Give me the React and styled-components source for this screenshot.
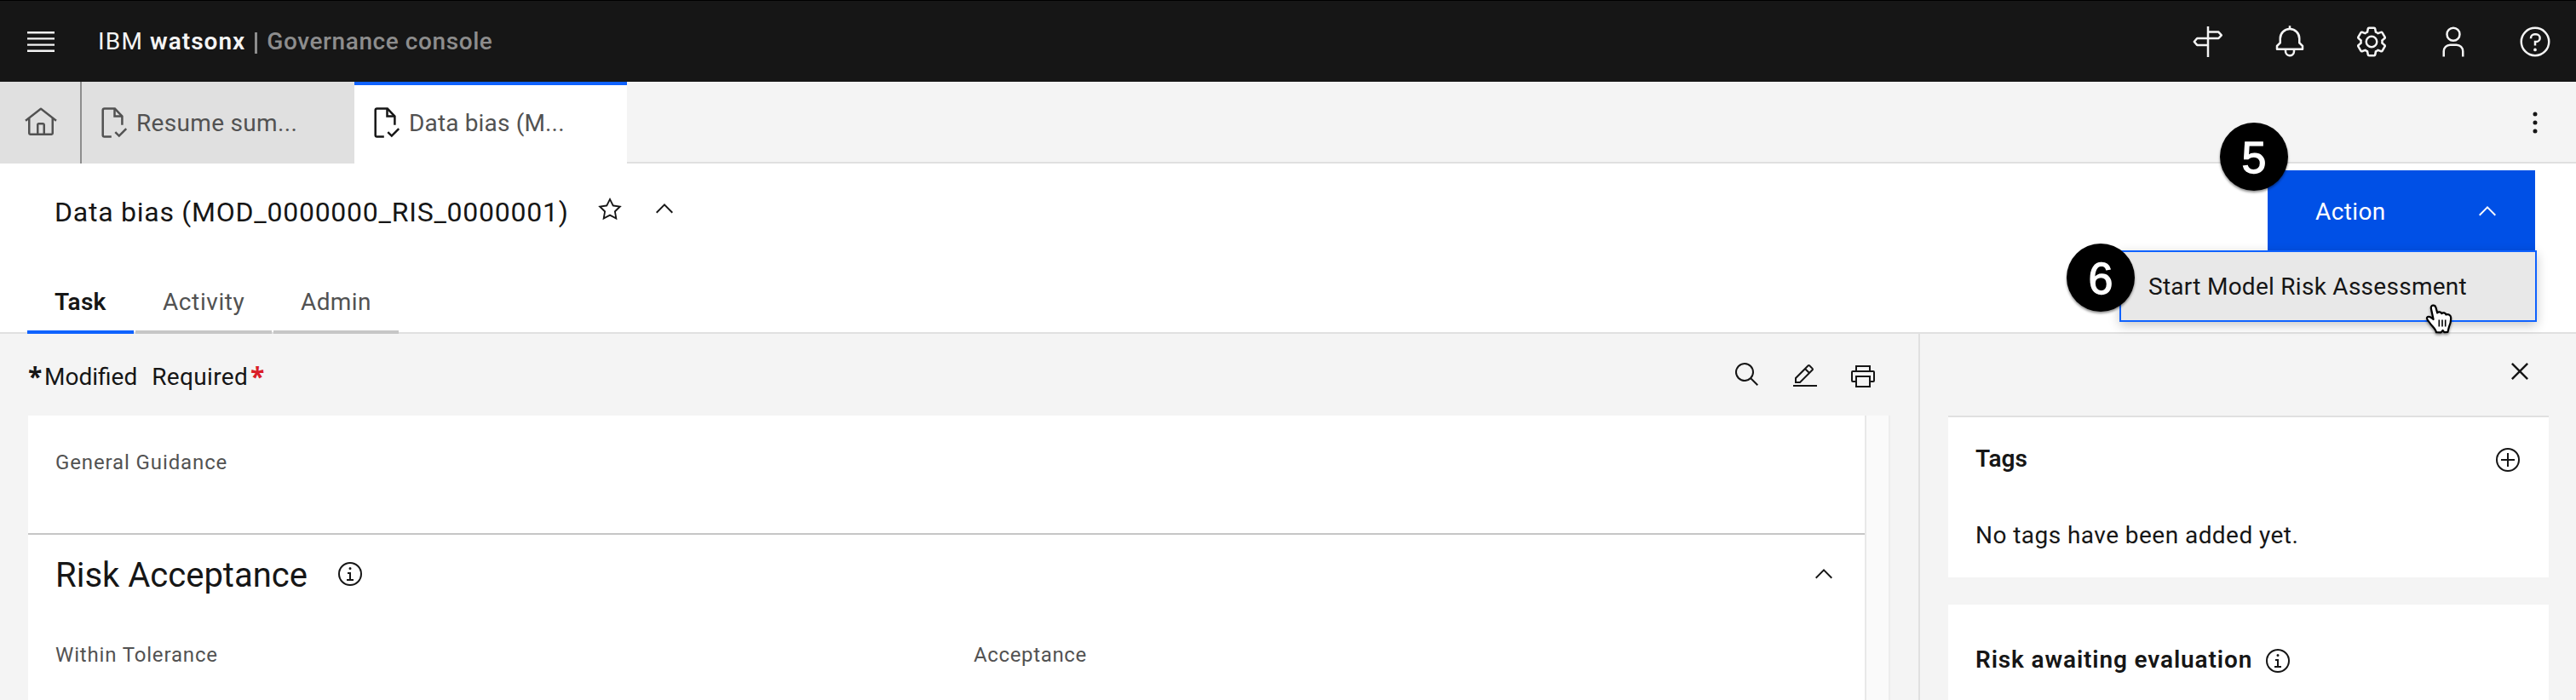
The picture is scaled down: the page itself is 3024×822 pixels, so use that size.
import React from "react";
import styled, { createGlobalStyle } from "styled-components";

const GlobalStyle = createGlobalStyle`
  * { box-sizing: border-box; }
  body {
    margin: 0;
    background: #f4f4f4;
    color: #161616;
    font-family: Roboto, "Liberation Sans", sans-serif;
    font-size: 28px;
    line-height: 36px;
  }
  button { font: inherit; color: inherit; background: none; border: 0; padding: 0; }
`;

/* ---------- icons ---------- */

const Svg = styled.svg`
  display: block;
  flex: none;
  width: ${(p) => p.$size}px;
  height: ${(p) => p.$size}px;
  fill: currentColor;
`;

const paths = {
  home: "M16.6123,2.2138a1.01,1.01,0,0,0-1.2427,0L1,13.4194l1.2427,1.5717L4,13.6208V26a2.0041,2.0041,0,0,0,2,2H26a2.0037,2.0037,0,0,0,2-2V13.63L29.7573,15,31,13.4282ZM18,26H14V18h4Zm2,0V18a2.0023,2.0023,0,0,0-2-2H14a2.002,2.002,0,0,0-2,2v8H6V12.0615l10-7.79,10,7.8005V26Z",
  bell: "M28.7071,19.293L26,16.5859V13a10.0136,10.0136,0,0,0-9-9.9492V1H15V3.0508A10.0136,10.0136,0,0,0,6,13v3.5859L3.2929,19.293A1,1,0,0,0,3,20v3a1,1,0,0,0,1,1h7v.7768a5.152,5.152,0,0,0,4.5,5.1987A5.0057,5.0057,0,0,0,21,25V24h7a1,1,0,0,0,1-1V20A1,1,0,0,0,28.7071,19.293ZM19,25a3,3,0,0,1-6,0V24h6Zm8-3H5V20.4141L7.707,17.707A1,1,0,0,0,8,17V13a8,8,0,0,1,16,0v4a1,1,0,0,0,.293.707L27,20.4141Z",
  settings:
    "M27,16.76c0-.25,0-.5,0-.76s0-.51,0-.77l1.92-1.68A2,2,0,0,0,29.3,11L26.94,7a2,2,0,0,0-1.73-1,2,2,0,0,0-.64.1l-2.43.82a11.35,11.35,0,0,0-1.31-.75l-.51-2.52a2,2,0,0,0-2-1.61H13.64a2,2,0,0,0-2,1.61l-.51,2.52a11.48,11.48,0,0,0-1.32.75L7.43,6.06A2,2,0,0,0,6.79,6,2,2,0,0,0,5.06,7L2.7,11a2,2,0,0,0,.41,2.51L5,15.24c0,.25,0,.5,0,.76s0,.51,0,.77L3.11,18.45A2,2,0,0,0,2.7,21L5.06,25a2,2,0,0,0,1.73,1,2,2,0,0,0,.64-.1l2.43-.82a11.35,11.35,0,0,0,1.31.75l.51,2.52a2,2,0,0,0,2,1.61h4.72a2,2,0,0,0,2-1.61l.51-2.52a11.48,11.48,0,0,0,1.32-.75l2.42.82a2,2,0,0,0,.64.1,2,2,0,0,0,1.73-1L29.3,21a2,2,0,0,0-.41-2.51ZM25.21,24l-3.43-1.16a8.86,8.86,0,0,1-2.71,1.57L18.36,28H13.64l-.71-3.55a9.36,9.36,0,0,1-2.7-1.57L6.79,24,4.43,20l2.72-2.4a8.9,8.9,0,0,1,0-3.13L4.43,12,6.79,8l3.43,1.16a8.86,8.86,0,0,1,2.71-1.57L13.64,4h4.72l.71,3.55a9.36,9.36,0,0,1,2.7,1.57L25.21,8,27.57,12l-2.72,2.4a8.9,8.9,0,0,1,0,3.13L27.57,20ZM16,22a6,6,0,1,1,6-6A5.94,5.94,0,0,1,16,22Zm0-10a3.91,3.91,0,0,0-4,4,3.91,3.91,0,0,0,4,4,3.91,3.91,0,0,0,4-4A3.91,3.91,0,0,0,16,12Z",
  user: "M16 4a5 5 0 1 1-5 5 5 5 0 0 1 5-5m0-2a7 7 0 1 0 7 7A7 7 0 0 0 16 2zM26 30H24V25a5 5 0 0 0-5-5H13a5 5 0 0 0-5 5v5H6V25a7 7 0 0 1 7-7h6a7 7 0 0 1 7 7z",
  help: "M16,2A14,14,0,1,0,30,16,14,14,0,0,0,16,2Zm0,26A12,12,0,1,1,28,16,12,12,0,0,1,16,28ZM16 22a1.5 1.5 0 1 0 1.5 1.5A1.5 1.5 0 0 0 16 22zM17,8H15.5A4.49,4.49,0,0,0,11,12.5V13h2v-.5A2.5,2.5,0,0,1,15.5,10H17a2.5,2.5,0,0,1,0,5H15v4.5h2V17a4.5,4.5,0,0,0,0-9Z",
  overflow:
    "M16 6a2 2 0 1 0 2 2 2 2 0 0 0-2-2zM16 14a2 2 0 1 0 2 2 2 2 0 0 0-2-2zM16 22a2 2 0 1 0 2 2 2 2 0 0 0-2-2z",
  star: "M16,6.52l2.76,5.58.46,1,1,.15,6.16.89L22,18.44l-.75.73.18,1,1.05,6.13-5.51-2.89L16,23l-.93.49L9.56,26.34l1-6.13.18-1L10,18.44,5.58,14.09l6.16-.89,1-.15.46-1L16,6.52M16,2l-4.55,9.22L1.28,12.69l7.36,7.18L6.9,30,16,25.22,25.1,30,23.36,19.87l7.36-7.17L20.55,11.22Z",
  chevronUp: "M16 10L26 20 24.6 21.4 16 12.8 7.4 21.4 6 20z",
  search:
    "M29,27.5859l-7.5521-7.5521a11.0177,11.0177,0,1,0-1.4141,1.4141L27.5859,29ZM4,13a9,9,0,1,1,9,9A9.01,9.01,0,0,1,4,13Z",
  edit: "M2 26H30V28H2zM25.4 9c.8-.8.8-2 0-2.8l-3.6-3.6c-.8-.8-2-.8-2.8 0l-15 15V24h6.4L25.4 9zM20.4 4L24 7.6l-3 3L17.4 7 20.4 4zM6 22v-3.6l10-10 3.6 3.6-10 10H6z",
  printer:
    "M28,9H25V3H7V9H4a2,2,0,0,0-2,2V21a2,2,0,0,0,2,2H7v6H25V23h3a2,2,0,0,0,2-2V11A2,2,0,0,0,28,9ZM9,5H23V9H9ZM23,27H9V17H23Zm5-6H25V15H7v6H4V11H28Z",
  info: "M17 22L17 14 13 14 13 16 15 16 15 22 12 22 12 24 20 24 20 22 17 22zM16 8a1.5 1.5 0 1 0 1.5 1.5A1.5 1.5 0 0 0 16 8zM16 30A14 14 0 1 1 30 16 14 14 0 0 1 16 30zm0-26A12 12 0 1 0 28 16 12 12 0 0 0 16 4z",
  add: "M16,4A12,12,0,1,1,4,16,12,12,0,0,1,16,4m0-2A14,14,0,1,0,30,16,14,14,0,0,0,16,2ZM24 15 17 15 17 8 15 8 15 15 8 15 8 17 15 17 15 24 17 24 17 17 24 17z",
  close:
    "M24 9.4 22.6 8 16 14.6 9.4 8 8 9.4 14.6 16 8 22.6 9.4 24 16 17.4 22.6 24 24 22.6 17.4 16 24 9.4z",
};

const Icon = ({ name, size = 32 }) => (
  <Svg $size={size} viewBox="0 0 32 32" aria-hidden="true">
    <path d={paths[name]} />
  </Svg>
);

const MenuIcon = () => (
  <Svg $size={40} viewBox="0 0 20 20" aria-hidden="true">
    <path d="M2 14.8H18V16H2zM2 11.2H18V12.4H2zM2 7.6H18V8.8H2zM2 4H18V5.2H2z" />
  </Svg>
);

const SignpostIcon = () => (
  <Svg $size={40} viewBox="0 0 40 40" aria-hidden="true">
    <g fill="none" stroke="currentColor" strokeWidth="2.5" strokeLinejoin="round">
      <path d="M20 2V38" />
      <path d="M20 8.6H32.4L35.8 12.3 32.4 16H7.2L3.8 20 7.2 23.9H20" />
    </g>
  </Svg>
);

const DocCheckIcon = () => (
  <Svg $size={40} viewBox="0 0 40 40" aria-hidden="true">
    <g fill="none" stroke="currentColor" strokeWidth="2.5">
      <path d="M15.8 36.5H7.5Q5.7 36.5 5.7 34.7V5.3Q5.7 3.6 7.5 3.6H19.8L28.4 12.6V22.7" />
      <path d="M19.5 3.6V12.5H28.4" />
      <path d="M20.3 31.2 24.8 35.6 33.2 27.2" />
    </g>
  </Svg>
);

const HandSvg = styled.svg`
  position: absolute;
  left: 356px;
  top: 60px;
  width: 36px;
  height: 40px;
  overflow: visible;
  filter: drop-shadow(0 2px 1.5px rgba(0, 0, 0, 0.4));
`;

const HandCursor = () => (
  <HandSvg viewBox="0 0 36 40" aria-hidden="true">
    <path
      d="M7.9 6.4C7 1.8 12.4 1.2 13.5 5.2L15.2 11.4C16.4 9.8 19.6 10.2 20.2 12.2 21.6 10.7 24.9 11.2 25.4 13.5 27.4 12.3 30.6 13.6 31 16.2 31.6 21 30.4 24.5 29 27.6L27.4 34 23.3 34.2 21.6 32 19.5 34.4 14 34.2C13.4 30.6 9.6 27.6 7.2 24.3 5.4 21.6 2.4 19.2 3 17.2 4 14.6 8.2 16.2 10.6 19Z"
      fill="#fff"
      stroke="#000"
      strokeWidth="2.2"
      strokeLinejoin="round"
    />
    <path d="M17.3 19.5V27.5M21 19.5V27.5M24.7 19.5V27.5" stroke="#000" strokeWidth="1.6" fill="none" />
  </HandSvg>
);

/* ---------- text ---------- */

const Text = styled.span`
  display: inline-block;
  white-space: nowrap;
  padding-top: ${(p) => p.$drop || 0}px;
  font-size: ${(p) => p.$size || 28}px;
  font-weight: ${(p) => p.$weight || 400};
  letter-spacing: ${(p) => p.$track || 0}px;
  color: ${(p) => p.$color || "inherit"};
`;

/* ---------- global header ---------- */

const TopBar = styled.header`
  display: flex;
  align-items: stretch;
  height: 96px;
  background: #161616;
  color: #f4f4f4;
  border-top: 1px solid #000;
`;

const IconCell = styled.button`
  display: flex;
  align-items: center;
  justify-content: center;
  width: 96px;
  flex: none;
`;

const Brand = styled.div`
  display: flex;
  align-items: center;
  flex: 1;
  padding-left: 19px;
`;

const BrandBar = styled.span`
  width: 3px;
  height: 25px;
  margin: 4px 11px 0 11px;
  background: #8d8d8d;
`;

const BrandName = styled(Text)`
  margin-left: 8px;
`;

/* ---------- document tabs ---------- */

const TabStrip = styled.nav`
  display: flex;
  height: 96px;
  background: #f4f4f4;
`;

const HomeTab = styled(IconCell)`
  padding-left: 2px;
  background: #e0e0e0;
  color: #525252;
  border-right: 2px solid #8d8d8d;
`;

const DocTab = styled.button`
  display: flex;
  align-items: center;
  gap: 5px;
  width: 320px;
  padding-left: 19px;
  background: ${(p) => (p.$active ? "#fff" : "#e0e0e0")};
  color: ${(p) => (p.$active ? "#161616" : "#525252")};
  box-shadow: ${(p) => (p.$active ? "inset 0 4px 0 #0f62fe" : "none")};
`;

const StripRest = styled.div`
  display: flex;
  flex: 1;
  justify-content: flex-end;
  box-shadow: inset 0 -2px 0 #e0e0e0;
`;

/* ---------- record header ---------- */

const RecordHeader = styled.section`
  display: flex;
  flex-direction: column;
  justify-content: space-between;
  height: 200px;
  padding-top: 8px;
  background: #fff;
  border-bottom: 2px solid #e0e0e0;
`;

const TitleRow = styled.div`
  display: flex;
  align-items: center;
  height: 94px;
  padding: 0 48px 0 64px;
`;

const TitleText = styled(Text)`
  width: 637px;
`;

const TitleActions = styled.div`
  display: flex;
  align-items: center;
  gap: 33px;
  flex: 1;
  padding-bottom: 5px;
`;

const ActionWrap = styled.div`
  position: relative;
  width: 314px;
  height: 94px;
`;

const ActionButton = styled.button`
  display: flex;
  align-items: center;
  justify-content: space-between;
  width: 100%;
  height: 100%;
  padding: 2px 40px 0 56px;
  background: #0050e6;
  color: #fff;
`;

const ActionMenu = styled.div`
  position: absolute;
  top: 94px;
  right: -2px;
  display: flex;
  align-items: center;
  width: 490px;
  height: 84px;
  padding-left: 32px;
  background: #e8e8e8;
  border: 2px solid #0f62fe;
  box-shadow: 0 4px 12px rgba(0, 0, 0, 0.22);
`;

const StepMarker = styled.span`
  position: absolute;
  left: ${(p) => p.$left}px;
  top: ${(p) => p.$top}px;
  display: flex;
  align-items: center;
  justify-content: center;
  width: 80px;
  height: 80px;
  padding-top: 2px;
  border-radius: 50%;
  background: #000;
  color: #fff;
  font-family: "Liberation Sans", Arial, sans-serif;
  font-size: 52px;
  line-height: 60px;
  -webkit-text-stroke: 1.3px #fff;
  box-shadow: 0 2px 3px rgba(0, 0, 0, 0.45);
`;

const ViewTabs = styled.div`
  display: flex;
  gap: 2px;
  padding-left: 32px;
  margin-bottom: -2px;
`;

const ViewTab = styled.button`
  width: ${(p) => p.$width}px;
  height: 80px;
  padding: 8px 0 0 32px;
  text-align: left;
  color: ${(p) => (p.$active ? "#161616" : "#525252")};
  border-bottom: 4px solid ${(p) => (p.$active ? "#0f62fe" : "#c6c6c6")};
`;

/* ---------- body ---------- */

const Body = styled.main`
  display: flex;
  height: 430px;
  overflow: hidden;
`;

const Primary = styled.section`
  display: flex;
  flex-direction: column;
  width: 2252px;
`;

const Toolbar = styled.div`
  display: flex;
  align-items: center;
  justify-content: space-between;
  height: 96px;
  flex: none;
  padding: 4px 49px 0 33px;
`;

const Legend = styled.div`
  display: flex;
  align-items: center;
`;

const Asterisk = styled(Text)`
  width: ${(p) => p.$width}px;
  font-family: "Open Sans", sans-serif;
  font-size: 30px;
  font-weight: 700;
`;

const LegendWord = styled(Text)`
  margin-right: ${(p) => p.$gap}px;
`;

const Tools = styled.div`
  display: flex;
  align-items: center;
  gap: 36px;
`;

const RaisedTool = styled.span`
  margin-bottom: 4px;
`;

const ScrollArea = styled.div`
  display: flex;
  flex: 1;
  margin: 0 33px;
`;

const Form = styled.div`
  width: 2156px;
  background: #fff;
`;

const ScrollGutter = styled.div`
  width: 30px;
  background: #fafafa;
  border-left: 2px solid #e8e8e8;
  border-right: 2px solid #ededed;
`;

const FieldBlock = styled.div`
  height: 140px;
  padding: 36px 32px 0;
  border-bottom: 2px solid #c6c6c6;
`;

const SectionHeader = styled.div`
  display: flex;
  align-items: center;
  height: 92px;
  padding: 0 32px;
`;

const SectionTitle = styled(Text)`
  width: 330px;
  line-height: 48px;
`;

const Spacer = styled.span`
  flex: 1;
`;

const FieldGrid = styled.div`
  display: grid;
  grid-template-columns: 1fr 1fr;
  padding-top: 30px;
`;

const Field = styled.div`
  padding-left: 32px;
`;

const Side = styled.aside`
  flex: 1;
  border-left: 2px solid #e0e0e0;
  padding: 0 32px 0 33px;
`;

const SideTop = styled.div`
  display: flex;
  align-items: center;
  justify-content: flex-end;
  height: 96px;
  padding: 0 14px 8px 0;
`;

const SideCard = styled.div`
  height: ${(p) => p.$height}px;
  padding: ${(p) => p.$top}px 32px 0;
  margin-bottom: 32px;
  background: #fff;
  border-top: ${(p) => (p.$line ? "2px solid #e0e0e0" : "0")};
`;

const SideHeading = styled.div`
  display: flex;
  align-items: center;
  justify-content: ${(p) => (p.$spread ? "space-between" : "flex-start")};
  gap: 14px;
  height: 36px;
`;

const SideIcon = styled.span`
  margin-top: 4px;
`;

const SideMessage = styled.div`
  margin-top: 55px;
`;

export default function App() {
  return (
    <>
      <GlobalStyle />
      <TopBar>
        <IconCell aria-label="Menu"><MenuIcon /></IconCell>
        <Brand>
          <Text $track={1.2}>IBM</Text>
          <BrandName $weight={600} $track={1}>watsonx</BrandName>
          <BrandBar />
          <Text $weight={500} $track={0.58} $color="#8d8d8d">Governance console</Text>
        </Brand>
        <IconCell aria-label="Tours"><SignpostIcon /></IconCell>
        <IconCell aria-label="Notifications"><Icon name="bell" size={40} /></IconCell>
        <IconCell aria-label="Settings"><Icon name="settings" size={40} /></IconCell>
        <IconCell aria-label="Profile"><Icon name="user" size={40} /></IconCell>
        <IconCell aria-label="Help"><Icon name="help" size={40} /></IconCell>
      </TopBar>

      <TabStrip>
        <HomeTab aria-label="Home"><Icon name="home" size={40} /></HomeTab>
        <DocTab>
          <DocCheckIcon />
          <Text $drop={2} $track={0.32} $color="#525252">Resume sum...</Text>
        </DocTab>
        <DocTab $active>
          <DocCheckIcon />
          <Text $drop={2} $track={0.16} $color="#525252">Data bias (M...</Text>
        </DocTab>
        <StripRest>
          <IconCell aria-label="More"><Icon name="overflow" size={40} /></IconCell>
        </StripRest>
      </TabStrip>

      <RecordHeader>
        <TitleRow>
          <TitleText $drop={4} $size={32} $track={0.75}>Data bias (MOD_0000000_RIS_0000001)</TitleText>
          <TitleActions>
            <Icon name="star" size={30} />
            <Icon name="chevronUp" />
          </TitleActions>
          <ActionWrap>
            <ActionButton>
              <Text $drop={2} $track={0.4}>Action</Text>
              <Icon name="chevronUp" />
            </ActionButton>
            <StepMarker $left={-56} $top={-56}>5</StepMarker>
            <ActionMenu>
              <Text $drop={2} $track={0.27}>Start Model Risk Assessment</Text>
              <StepMarker $left={-64} $top={-10}>6</StepMarker>
              <HandCursor />
            </ActionMenu>
          </ActionWrap>
        </TitleRow>
        <ViewTabs>
          <ViewTab $width={125} $active><Text $drop={2} $weight={600} $track={0.3}>Task</Text></ViewTab>
          <ViewTab $width={160}><Text $drop={2} $track={0.6}>Activity</Text></ViewTab>
          <ViewTab $width={147}><Text $drop={2} $track={0.4}>Admin</Text></ViewTab>
        </ViewTabs>
      </RecordHeader>

      <Body>
        <Primary>
          <Toolbar>
            <Legend>
              <Asterisk $width={19}>*</Asterisk>
              <LegendWord $drop={2} $gap={17} $track={0}>Modified</LegendWord>
              <LegendWord $drop={2} $gap={3} $track={0.35}>Required</LegendWord>
              <Asterisk $width={19} $color="#da1e28">*</Asterisk>
            </Legend>
            <Tools>
              <RaisedTool><Icon name="search" /></RaisedTool>
              <Icon name="edit" />
              <Icon name="printer" />
            </Tools>
          </Toolbar>
          <ScrollArea>
            <Form>
              <FieldBlock>
                <Text $size={24} $track={0.88} $color="#525252">General Guidance</Text>
              </FieldBlock>
              <SectionHeader>
                <SectionTitle $drop={3} $size={40} $track={0}>Risk Acceptance</SectionTitle>
                <Icon name="info" />
                <Spacer />
                <Icon name="chevronUp" />
              </SectionHeader>
              <FieldGrid>
                <Field><Text $size={24} $track={0.84} $color="#525252">Within Tolerance</Text></Field>
                <Field><Text $size={24} $track={0.65} $color="#525252">Acceptance</Text></Field>
              </FieldGrid>
            </Form>
            <ScrollGutter />
          </ScrollArea>
        </Primary>

        <Side>
          <SideTop><Icon name="close" size={40} /></SideTop>
          <SideCard $height={190} $top={30} $line>
            <SideHeading $spread>
              <Text $drop={2} $weight={600} $track={0.1}>Tags</Text>
              <SideIcon><Icon name="add" /></SideIcon>
            </SideHeading>
            <SideMessage><Text $track={0.45}>No tags have been added yet.</Text></SideMessage>
          </SideCard>
          <SideCard $height={200} $top={46}>
            <SideHeading>
              <Text $drop={2} $weight={600} $track={0.87}>Risk awaiting evaluation</Text>
              <SideIcon><Icon name="info" /></SideIcon>
            </SideHeading>
          </SideCard>
        </Side>
      </Body>
    </>
  );
}
